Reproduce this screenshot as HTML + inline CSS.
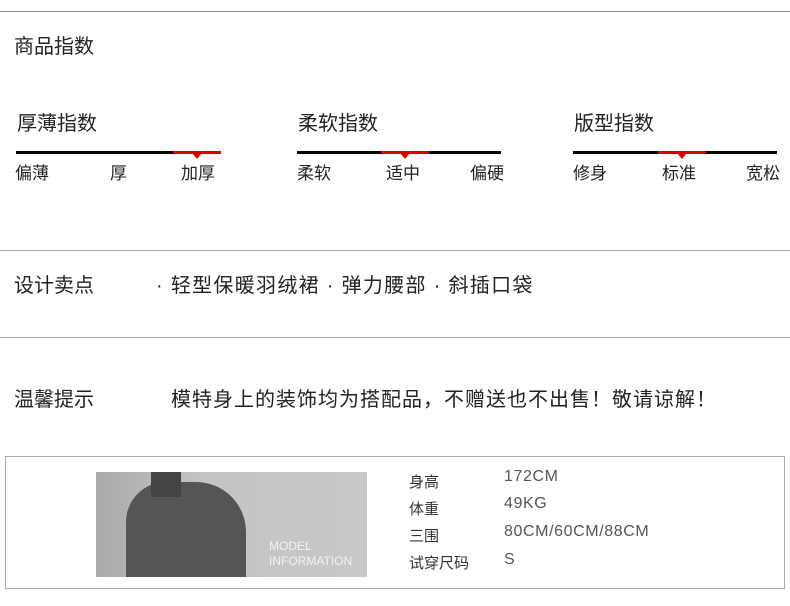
<!DOCTYPE html>
<html><head><meta charset="utf-8"><style>
body{margin:0;width:790px;height:606px;background:#fff;position:relative;overflow:hidden;font-family:"Liberation Sans","Noto Sans CJK SC",sans-serif;color:#222}
.a{position:absolute;white-space:nowrap}
.hl{position:absolute;left:0;width:790px;height:1px;background:#888}
.t{font-size:20px}
.l{font-size:17px}
.bar{position:absolute;height:3px;background:#000}
.red{position:absolute;height:3px;background:#d90000}
.tri{position:absolute;width:0;height:0;border-left:4px solid transparent;border-right:4px solid transparent;border-top:5px solid #d90000}
</style></head><body>
<div class="hl" style="top:11px"></div>
<div class="a t" style="left:14px;top:30px">商品指数</div>

<div class="a t" style="left:17px;top:107px">厚薄指数</div>
<div class="bar" style="left:16px;top:151px;width:205px"></div>
<div class="red" style="left:173px;top:151px;width:48px"></div>
<div class="tri" style="left:193px;top:154px"></div>
<div class="a l" style="left:15px;top:159px">偏薄</div>
<div class="a l" style="left:110px;top:159px">厚</div>
<div class="a l" style="left:181px;top:159px">加厚</div>

<div class="a t" style="left:298px;top:107px">柔软指数</div>
<div class="bar" style="left:297px;top:151px;width:204px"></div>
<div class="red" style="left:381px;top:151px;width:48px"></div>
<div class="tri" style="left:401px;top:154px"></div>
<div class="a l" style="left:297px;top:159px">柔软</div>
<div class="a l" style="left:386px;top:159px">适中</div>
<div class="a l" style="left:470px;top:159px">偏硬</div>

<div class="a t" style="left:574px;top:107px">版型指数</div>
<div class="bar" style="left:573px;top:151px;width:204px"></div>
<div class="red" style="left:658px;top:151px;width:48px"></div>
<div class="tri" style="left:678px;top:154px"></div>
<div class="a l" style="left:573px;top:159px">修身</div>
<div class="a l" style="left:662px;top:159px">标准</div>
<div class="a l" style="left:746px;top:159px">宽松</div>

<div class="hl" style="top:250px;background:#aaa"></div>
<div class="a t" style="left:14px;top:269px">设计卖点</div>
<div class="a t" style="left:156px;top:269px;letter-spacing:1.3px">· 轻型保暖羽绒裙 · 弹力腰部 · 斜插口袋</div>
<div class="hl" style="top:337px;background:#aaa"></div>
<div class="a t" style="left:14px;top:383px">温馨提示</div>
<div class="a t" style="left:171px;top:383px;letter-spacing:1px">模特身上的装饰均为搭配品，不赠送也不出售！敬请谅解！</div>

<div style="position:absolute;left:5px;top:456px;width:778px;height:131px;border:1px solid #aaa"></div>
<div style="position:absolute;left:96px;top:472px;width:271px;height:105px;background:linear-gradient(90deg,#aaa,#c4c4c4 40%,#c8c8c8);overflow:hidden">
<div style="position:absolute;left:30px;top:10px;width:120px;height:110px;background:#555;border-radius:40px 50px 0 0"></div>
<div style="position:absolute;left:55px;top:0;width:30px;height:25px;background:#444"></div>
<div class="a" style="left:173px;top:67px;font-size:12px;color:#f2f2f2;line-height:15px">MODEL<br>INFORMATION</div>
</div>
<div class="a" style="left:409px;top:471px;font-size:15px;color:#333">身高</div>
<div class="a" style="left:409px;top:498px;font-size:15px;color:#333">体重</div>
<div class="a" style="left:409px;top:525px;font-size:15px;color:#333">三围</div>
<div class="a" style="left:409px;top:552px;font-size:15px;color:#333">试穿尺码</div>
<div class="a" style="left:504px;top:468px;font-size:16px;color:#555;letter-spacing:0.6px">172CM</div>
<div class="a" style="left:504px;top:495px;font-size:16px;color:#555;letter-spacing:0.6px">49KG</div>
<div class="a" style="left:504px;top:523px;font-size:16px;color:#555;letter-spacing:0.6px">80CM/60CM/88CM</div>
<div class="a" style="left:504px;top:551px;font-size:16px;color:#555">S</div>
</body></html>
